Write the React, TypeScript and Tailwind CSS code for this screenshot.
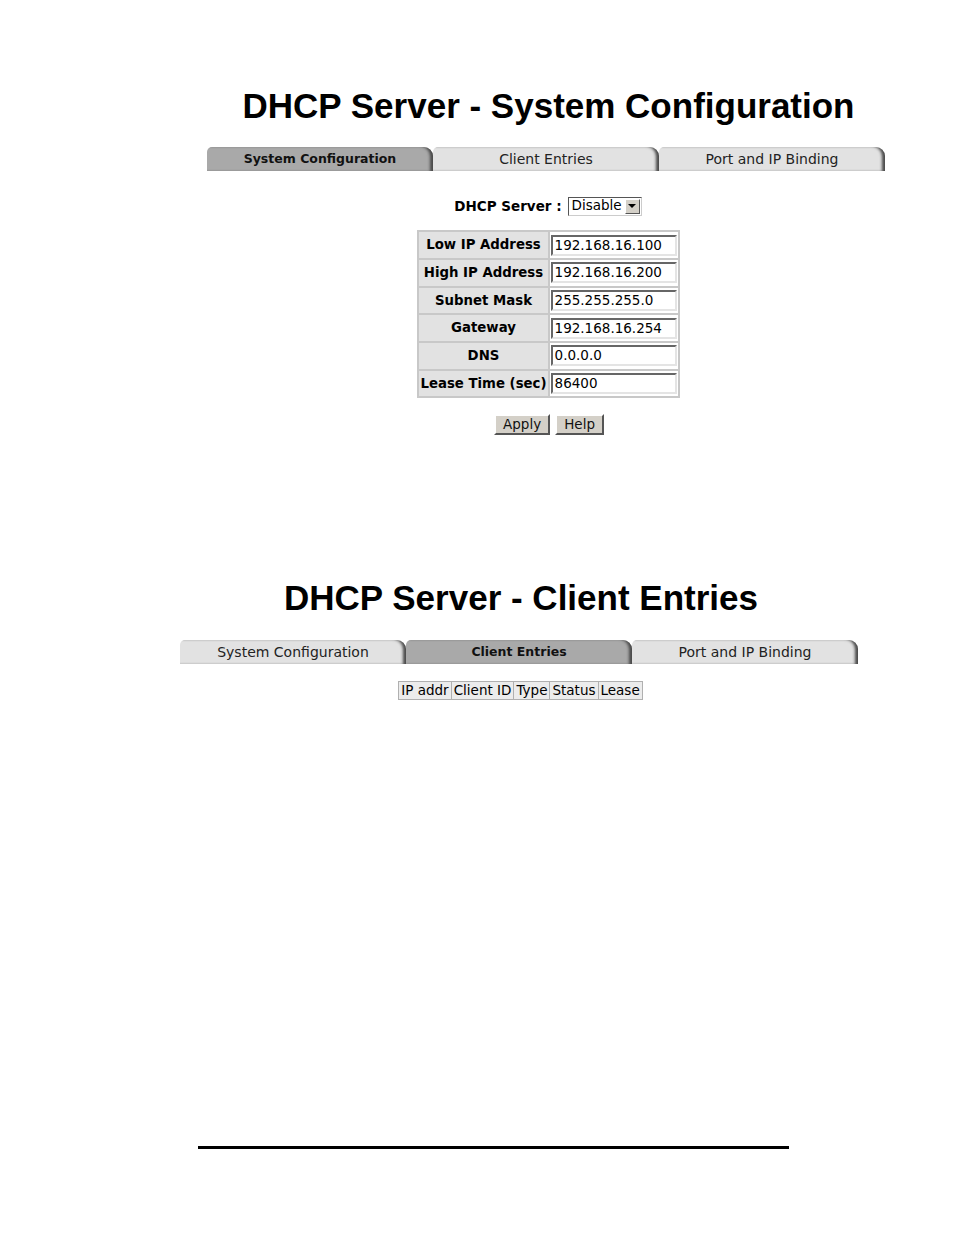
import React from "react";

const verdana = { fontFamily: '"DejaVu Sans", Verdana, sans-serif' };
const arial = { fontFamily: '"Liberation Sans", Arial, sans-serif' };

type TabsProps = { active: number };

function Tabs({ active }: TabsProps) {
  const names = ["System Configuration", "Client Entries", "Port and IP Binding"];
  return (
    <div className="flex h-[24px] w-[678px]">
      {names.map((n, i) => (
        <div
          key={n}
          className={
            "flex-1 flex items-center justify-center rounded-tl-[5px] rounded-tr-[9px] shadow-[inset_-4px_0_3px_-1px_#4a4a4a] " +
            (i === active ? "bg-[#a9a9a9] font-bold text-[#111] text-[12.5px]" : "bg-[#e2e2e2] text-[#222] text-[14px]")
          }
        >
          {n}
        </div>
      ))}
    </div>
  );
}

const rows: [string, string][] = [
  ["Low IP Address", "192.168.16.100"],
  ["High IP Address", "192.168.16.200"],
  ["Subnet Mask", "255.255.255.0"],
  ["Gateway", "192.168.16.254"],
  ["DNS", "0.0.0.0"],
  ["Lease Time (sec)", "86400"],
];

function Btn({ label }: { label: string }) {
  return (
    <button className="h-[21px] px-[7px] bg-[#d4d0c8] text-[13.5px] text-[#111] border-2 border-t-white border-l-white border-b-[#555] border-r-[#555] leading-none">
      {label}
    </button>
  );
}

export default function App() {
  return (
    <div className="w-[954px] h-[1235px] bg-white text-black" style={verdana}>
      {/* section 1 */}
      <div className="ml-[207px] w-[678px] pt-[88px]">
        <h1 className="text-[35px] font-bold text-center leading-none h-[40px] pl-[5px]" style={arial}>
          DHCP Server - System Configuration
        </h1>
        <div className="mt-[19px]">
          <Tabs active={0} />
        </div>
        <div className="flex items-center justify-center mt-[25px] gap-[6px] pl-[4px]">
          <span className="text-[13.5px] font-bold">DHCP Server :</span>
          <div className="flex items-center h-[19px] border border-t-[#555] border-l-[#555] border-b-[#ccc] border-r-[#ccc] bg-white pl-[3px]">
            <span className="text-[13.5px] leading-none pr-[3px]">Disable</span>
            <div className="w-[15px] h-[15px] mr-[1px] bg-[#d4d0c8] border border-t-white border-l-white border-b-[#555] border-r-[#555] flex items-center justify-center">
              <div className="w-0 h-0 border-l-[4px] border-r-[4px] border-t-[4px] border-l-transparent border-r-transparent border-t-black" />
            </div>
          </div>
        </div>
        <div className="flex justify-center mt-[14px] pl-[5px]">
          <table className="border-2 border-[#c8c8c8] border-collapse">
            <tbody>
              {rows.map(([l, v]) => (
                <tr key={l} className="h-[27.7px]">
                  <td className="bg-[#e2e2e2] border-2 border-[#c8c8c8] text-[13.3px] font-bold text-center px-[1px] w-[128px] whitespace-nowrap">
                    {l}
                  </td>
                  <td className="border-2 border-[#c8c8c8] px-[1px]">
                    <div className="w-[126px] h-[21px] border-2 border-t-[#666] border-l-[#666] border-b-[#e4e4e4] border-r-[#e4e4e4] bg-white text-[13.5px] leading-[17px] pl-[2px]">
                      {v}
                    </div>
                  </td>
                </tr>
              ))}
            </tbody>
          </table>
        </div>
        <div className="flex justify-center gap-[5px] mt-[16px] pl-[6px]">
          <Btn label="Apply" />
          <Btn label="Help" />
        </div>
      </div>

      {/* section 2 */}
      <div className="ml-[180px] w-[678px] pt-[145px]">
        <h1 className="text-[35px] font-bold text-center leading-none h-[40px] pl-[4px]" style={arial}>
          DHCP Server - Client Entries
        </h1>
        <div className="mt-[20px]">
          <Tabs active={1} />
        </div>
        <div className="flex justify-center mt-[17px] pl-[3px]">
          <table className="border border-[#b0b0b0] border-collapse">
            <tbody>
              <tr className="h-[18px]">
                {["IP addr", "Client ID", "Type", "Status", "Lease"].map((h) => (
                  <td key={h} className="border border-[#b0b0b0] bg-[#ececec] text-[13.5px] leading-none px-[2px] whitespace-nowrap">
                    {h}
                  </td>
                ))}
              </tr>
            </tbody>
          </table>
        </div>
      </div>

      {/* footer rule */}
      <div className="ml-[198px] w-[591px] h-[3px] bg-black mt-[446px]" />
    </div>
  );
}
